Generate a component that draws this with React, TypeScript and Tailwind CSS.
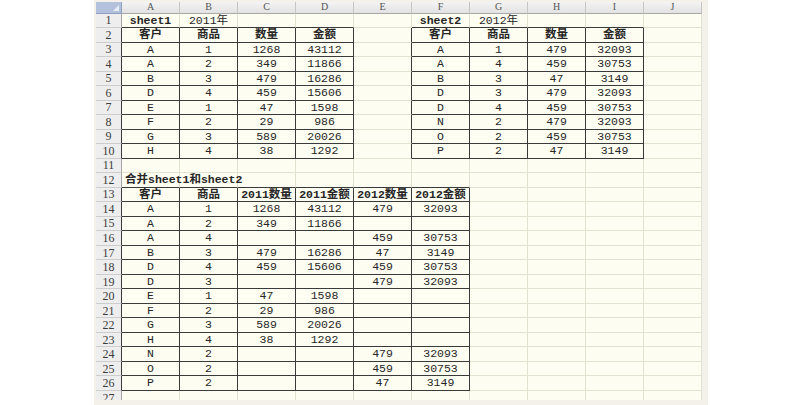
import React from "react";

type Cell = { t: string; b?: boolean; left?: boolean };

const COLS = ["A", "B", "C", "D", "E", "F", "G", "H", "I", "J"];

// sheet contents, keyed by row number then column index
const data: Record<number, Record<number, Cell>> = {};

function put(row: number, col: number, values: (string | number)[], bold = false) {
  values.forEach((v, i) => {
    if (v === "") return;
    data[row] = data[row] || {};
    data[row][col + i] = { t: String(v), b: bold };
  });
}

const head = ["客户", "商品", "数量", "金额"];

put(1, 0, ["sheet1"], true);
put(1, 1, ["2011年"]);
put(1, 5, ["sheet2"], true);
put(1, 6, ["2012年"]);
put(2, 0, head, true);
put(2, 5, head, true);

const sheet1 = [
  ["A", 1, 1268, 43112],
  ["A", 2, 349, 11866],
  ["B", 3, 479, 16286],
  ["D", 4, 459, 15606],
  ["E", 1, 47, 1598],
  ["F", 2, 29, 986],
  ["G", 3, 589, 20026],
  ["H", 4, 38, 1292],
];
const sheet2 = [
  ["A", 1, 479, 32093],
  ["A", 4, 459, 30753],
  ["B", 3, 47, 3149],
  ["D", 3, 479, 32093],
  ["D", 4, 459, 30753],
  ["N", 2, 479, 32093],
  ["O", 2, 459, 30753],
  ["P", 2, 47, 3149],
];
sheet1.forEach((r, i) => put(3 + i, 0, r));
sheet2.forEach((r, i) => put(3 + i, 5, r));

data[12] = { 0: { t: "合并sheet1和sheet2", b: true, left: true } };
put(13, 0, ["客户", "商品", "2011数量", "2011金额", "2012数量", "2012金额"], true);

const merged = [
  ["A", 1, 1268, 43112, 479, 32093],
  ["A", 2, 349, 11866, "", ""],
  ["A", 4, "", "", 459, 30753],
  ["B", 3, 479, 16286, 47, 3149],
  ["D", 4, 459, 15606, 459, 30753],
  ["D", 3, "", "", 479, 32093],
  ["E", 1, 47, 1598, "", ""],
  ["F", 2, 29, 986, "", ""],
  ["G", 3, 589, 20026, "", ""],
  ["H", 4, 38, 1292, "", ""],
  ["N", 2, "", "", 479, 32093],
  ["O", 2, "", "", 459, 30753],
  ["P", 2, "", "", 47, 3149],
];
merged.forEach((r, i) => put(14 + i, 0, r));

const tables = [
  { r0: 2, r1: 10, c0: 0, c1: 3 },
  { r0: 2, r1: 10, c0: 5, c1: 8 },
  { r0: 13, r1: 26, c0: 0, c1: 5 },
];

function inTable(r: number, c: number) {
  return tables.some((t) => r >= t.r0 && r <= t.r1 && c >= t.c0 && c <= t.c1);
}

const rows = Array.from({ length: 27 }, (_, i) => i + 1);

export default function App() {
  return (
    <div className="flex h-[405px] w-[800px] overflow-hidden bg-white">
      <div className="ml-[94px] h-[405px] w-[614px] bg-[#f4f1ea] pl-[2px] pt-[2px]">
        <div className="grid h-[398px] w-[606px] grid-cols-[26px_repeat(10,58px)] grid-rows-[11.5px_repeat(27,14.52px)] overflow-hidden bg-[#fdfdf1] font-['Liberation_Mono','Noto_Sans_CJK_SC',monospace] text-[11.5px] leading-none text-[#262626]">
          {/* corner + column letters */}
          <div className="relative border-r border-b border-r-[#8f9fbf] border-b-[#8f9fbf] bg-[#b3c1dc]">
            <svg className="absolute right-[2px] bottom-[2px]" width="6" height="6" viewBox="0 0 6 6">
              <path d="M6 0 L6 6 L0 6 Z" fill="#e8eef8" />
            </svg>
          </div>
          {COLS.map((c) => (
            <div
              key={c}
              className="flex items-center justify-center border-r border-b border-r-[#c6c6c6] border-b-[#a9a9a9] bg-gradient-to-b from-[#f4f4f4] to-[#e2e2e2] font-['Liberation_Serif',serif] text-[10px] text-[#555]"
            >
              {c}
            </div>
          ))}

          {rows.map((r) => (
            <React.Fragment key={r}>
              <div
                className={
                  "flex items-center justify-center border-r border-b border-b-[#cdcdcd] bg-[#eeeeee] font-['Liberation_Serif',serif] text-[12px] text-[#3c3c3c] " +
                  (inTable(r, 0) ? "border-r-[#3a3a3a]" : "border-r-[#a5a5a5]")
                }
              >
                {r}
              </div>
              {COLS.map((_, c) => {
                const cell = data[r]?.[c];
                const darkR = inTable(r, c) || inTable(r, c + 1);
                const darkB = inTable(r, c) || inTable(r + 1, c);
                return (
                  <div
                    key={c}
                    className={
                      "relative flex items-center overflow-visible whitespace-nowrap border-r border-b " +
                      (darkR ? "border-r-[#3a3a3a] " : "border-r-[#e2e2d0] ") +
                      (darkB ? "border-b-[#3a3a3a] " : "border-b-[#e2e2d0] ") +
                      (cell?.left ? "justify-start pl-[3px] " : "justify-center ") +
                      (cell?.b ? "z-10 font-bold" : "")
                    }
                  >
                    {cell?.t}
                  </div>
                );
              })}
            </React.Fragment>
          ))}
        </div>
      </div>
    </div>
  );
}
